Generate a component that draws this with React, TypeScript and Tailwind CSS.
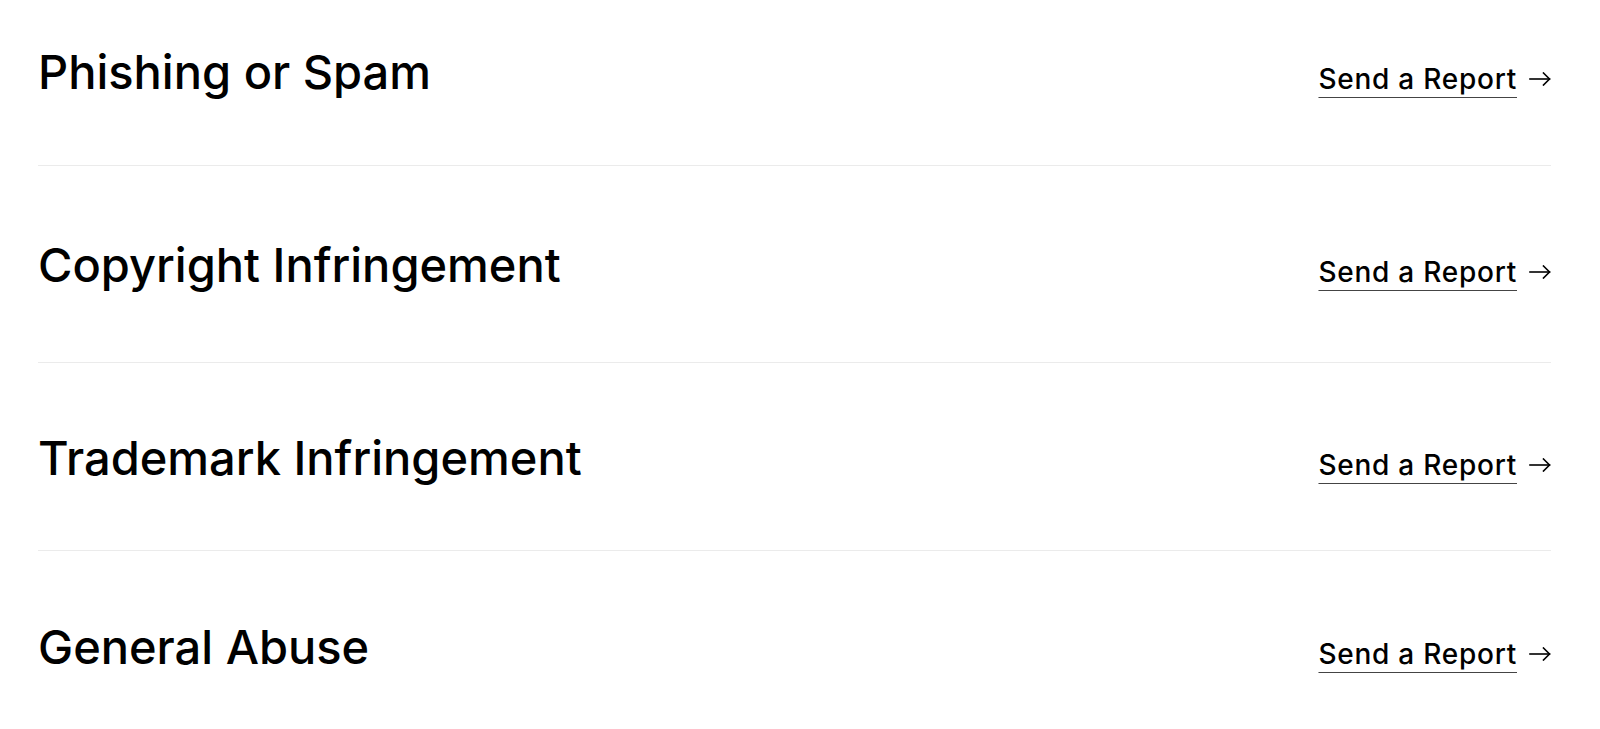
import React from "react";

function Arrow() {
  return (
    <svg width="22" height="14" viewBox="0 0 22 14" fill="none" stroke="#000" strokeWidth="1.6" strokeLinecap="square" className="ml-[12px] shrink-0 self-center">
      <path d="M1 7H20.5" />
      <path d="M14.5 1L20.5 7L14.5 13" />
    </svg>
  );
}

function Row({ title, cls }: { title: string; cls: string }) {
  return (
    <div className={`flex items-baseline justify-between ${cls}`}>
      <h2 className="text-[47px] leading-[56px] font-medium text-black tracking-[0px]">{title}</h2>
      <a href="#" className="flex items-baseline text-[28px] leading-[32px] font-medium text-black tracking-[0.75px]">
        <span className="underline decoration-1 underline-offset-[8px] decoration-[#444]">Send a Report</span>
        <Arrow />
      </a>
    </div>
  );
}

export default function App() {
  return (
    <div className="min-h-[729px] bg-white" style={{ fontFamily: "Inter, 'Noto Sans', sans-serif" }}>
      <div className="ml-[38px] w-[1513px]">
        <Row title="Phishing or Spam" cls="pt-[44px] pb-[65px] border-b border-[#ebebeb]" />
        <Row title="Copyright Infringement" cls="pt-[71px] pb-[69px] border-b border-[#ebebeb]" />
        <Row title="Trademark Infringement" cls="pt-[67px] pb-[64px] border-b border-[#ebebeb]" />
        <Row title="General Abuse" cls="pt-[68px] pb-[40px]" />
      </div>
    </div>
  );
}
